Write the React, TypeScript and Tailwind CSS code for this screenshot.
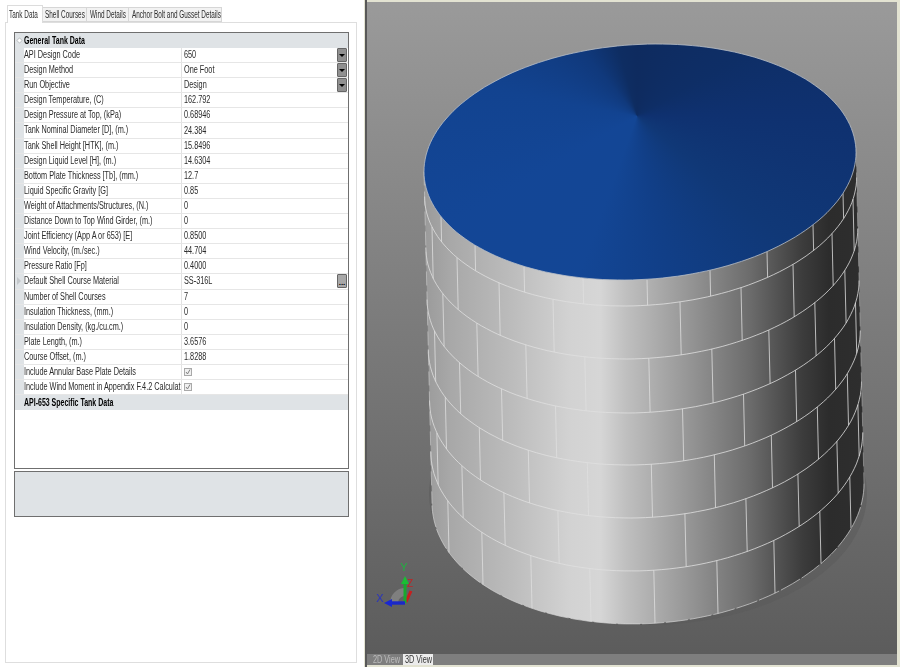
import React from "react";

type Row = { label: string; value?: string; button?: "drop" | "more"; check?: boolean; marker?: boolean };

const rows: Row[] = [
  { label: "API Design Code", value: "650", button: "drop" },
  { label: "Design Method", value: "One Foot", button: "drop" },
  { label: "Run Objective", value: "Design", button: "drop" },
  { label: "Design Temperature, (C)", value: "162.792" },
  { label: "Design Pressure at Top, (kPa)", value: "0.68946" },
  { label: "Tank Nominal Diameter [D], (m.)", value: "24.384" },
  { label: "Tank Shell Height [HTK], (m.)", value: "15.8496" },
  { label: "Design Liquid Level [H], (m.)", value: "14.6304" },
  { label: "Bottom Plate Thickness [Tb], (mm.)", value: "12.7" },
  { label: "Liquid Specific Gravity [G]", value: "0.85" },
  { label: "Weight of Attachments/Structures, (N.)", value: "0" },
  { label: "Distance Down to Top Wind Girder, (m.)", value: "0" },
  { label: "Joint Efficiency (App A or 653) [E]", value: "0.8500" },
  { label: "Wind Velocity, (m./sec.)", value: "44.704" },
  { label: "Pressure Ratio [Fp]", value: "0.4000" },
  { label: "Default Shell Course Material", value: "SS-316L", button: "more", marker: true },
  { label: "Number of Shell Courses", value: "7" },
  { label: "Insulation Thickness, (mm.)", value: "0" },
  { label: "Insulation Density, (kg./cu.cm.)", value: "0" },
  { label: "Plate Length, (m.)", value: "3.6576" },
  { label: "Course Offset, (m.)", value: "1.8288" },
  { label: "Include Annular Base Plate Details", check: true },
  { label: "Include Wind Moment in Appendix F.4.2 Calculations", check: true },
];

function T({ children }: { children: React.ReactNode }) {
  return <span className="inline-block origin-left scale-x-[0.73] whitespace-nowrap">{children}</span>;
}

function BoldText({ children }: { children: React.ReactNode }) {
  return <span className="inline-block origin-left scale-x-[0.7] whitespace-nowrap">{children}</span>;
}

function TabText({ children }: { children: React.ReactNode }) {
  return <span className="inline-block origin-left scale-x-[0.64] whitespace-nowrap">{children}</span>;
}

function PropRow({ row }: { row: Row }) {
  return (
    <div className="flex h-[15.1px] border-b border-[#e6e6e6]">
      <div className="relative w-[9px] shrink-0 bg-[#dfe3e6]">
        {row.marker && (
          <span className="absolute left-[2px] top-[3px] h-0 w-0 border-y-[4px] border-l-[4px] border-y-transparent border-l-[#c4c8cb]" />
        )}
      </div>
      <div className="w-[158px] shrink-0 overflow-hidden whitespace-nowrap border-r border-[#e2e2e2] leading-[14px]">
        <T>{row.label}</T>
      </div>
      <div className="flex min-w-0 flex-1 items-center justify-between pl-[1.5px] leading-[14px]">
        {row.check ? (
          <span className="flex h-[8px] w-[8px] items-center justify-center border border-[#a9a9a9] bg-[#f0f0f0]">
            <svg width="6" height="6" viewBox="0 0 6 6">
              <path d="M1 3 L2.5 5 L5 0.5" fill="none" stroke="#777" strokeWidth="0.9" />
            </svg>
          </span>
        ) : (
          <T>{row.value}</T>
        )}
        {row.button === "drop" && (
          <span className="mr-px flex h-[14px] w-[10px] items-center justify-center rounded-[1px] border border-[#666] bg-[#909090]">
            <span className="h-0 w-0 border-x-[3px] border-t-[3px] border-x-transparent border-t-black" />
          </span>
        )}
        {row.button === "more" && (
          <span className="mr-px flex h-[14px] w-[10px] items-end justify-center rounded-[1px] border border-[#666] bg-[#a8a8a8] text-[8px] font-bold leading-[9px] text-black">
            ...
          </span>
        )}
      </div>
    </div>
  );
}

const A = 216;
const SHEAR = 9.5;
const geo = (h: number) => ({ cx: 640 + 8 * h, cy: 162 + 331 * h, b: 117.6 + 13 * h });
const pt = (t: number, h: number) => {
  const g = geo(h);
  return [g.cx + A * Math.cos(t), g.cy + g.b * Math.sin(t) - SHEAR * Math.cos(t)];
};
const fmt = (p: number[]) => `${p[0].toFixed(1)} ${p[1].toFixed(1)}`;
const arc = (h: number, from: number, to: number, n = 90) => {
  const out: string[] = [];
  for (let i = 0; i <= n; i++) out.push(fmt(pt(from + ((to - from) * i) / n, h)));
  return out;
};
const lowestToH = (y: number) => (y - 280) / 344;
const joints = [280, 306, 359, 413, 465, 518, 571, 624].map(lowestToH);
const oddX = [441, 475, 524, 583, 647, 710, 767, 813, 843];
const evenX = [432, 457, 499, 553, 680, 741, 793, 832, 853];
const thetaOf = (x: number, h: number) => Math.acos((x - geo(h).cx) / A);

function Scene() {
  const topOutline = "M" + arc(0, 0, Math.PI * 2, 180).join(" L") + " Z";
  const side =
    "M" + arc(1, 0, Math.PI).join(" L") + " L" + fmt(pt(Math.PI, 0)) + " L" + fmt(pt(0, 0)) + " Z";
  const lines = [];
  for (let k = 0; k < 7; k++) {
    const xs = k % 2 === 0 ? oddX : evenX;
    const ref = joints[k % 2 === 0 ? 0 : 1];
    for (const x of xs) {
      const t = thetaOf(x, ref);
      lines.push(
        <path
          key={`${k}-${x}`}
          d={`M${fmt(pt(t, joints[k]))} L${fmt(pt(t, joints[k + 1]))}`}
          stroke="#dedede"
          strokeWidth="0.8"
          fill="none"
        />
      );
    }
  }
  return (
    <svg className="block h-[652px] w-[530px] [filter:blur(0.3px)]" viewBox="367 2 530 652">
      <defs>
        <linearGradient id="shell" gradientUnits="userSpaceOnUse" x1="424" y1="0" x2="864" y2="0">
          <stop offset="0" stopColor="#9a9a9a" />
          <stop offset="0.06" stopColor="#a8a8a8" />
          <stop offset="0.2" stopColor="#bcbcbc" />
          <stop offset="0.33" stopColor="#d2d2d2" />
          <stop offset="0.4" stopColor="#d6d6d6" />
          <stop offset="0.46" stopColor="#bfbfbf" />
          <stop offset="0.58" stopColor="#9c9c9c" />
          <stop offset="0.74" stopColor="#6c6c6c" />
          <stop offset="0.86" stopColor="#3c3c3c" />
          <stop offset="0.92" stopColor="#2c2c2c" />
          <stop offset="1" stopColor="#2e2e2e" />
        </linearGradient>
        <clipPath id="roof">
          <path d={topOutline} />
        </clipPath>
        <linearGradient id="bg" x1="0" y1="0" x2="0" y2="1">
          <stop offset="0" stopColor="#9a9a9a" />
          <stop offset="1" stopColor="#5c5c5c" />
        </linearGradient>
      </defs>
      <rect x="367" y="2" width="530" height="652" fill="url(#bg)" />
      <ellipse cx="648" cy="494" rx="219" ry="131" fill="#5a5a5a" opacity="0.5" />
      <path d={side} fill="url(#shell)" />
      {lines}
      {joints.slice(1, -1).map((h, i) => (
        <path key={i} d={"M" + arc(h, 0, Math.PI).join(" L")} fill="none" stroke="#e0e0e0" strokeWidth="0.8" />
      ))}
      <path d={"M" + arc(1, 0, Math.PI).join(" L")} fill="none" stroke="#d4d4d4" strokeWidth="0.7" strokeDasharray="22 2" />
      <path d={`M${fmt(pt(Math.PI, 0))} L${fmt(pt(Math.PI, 1))}`} stroke="#cfcfcf" strokeWidth="0.6" strokeDasharray="14 6" />
      <path d={`M${fmt(pt(0, 0))} L${fmt(pt(0, 1))}`} stroke="#a8a8a8" strokeWidth="0.6" strokeDasharray="14 6" />
      <g clipPath="url(#roof)">
        <foreignObject x="420" y="40" width="442" height="244">
          <div className="h-[244px] w-[442px] bg-[conic-gradient(at_217px_76px,#0e2b5f_0deg,#0e2e66_60deg,#0f3170_90deg,#103877_130deg,#113f88_170deg,#134695_200deg,#134696_240deg,#124390_280deg,#10397c_320deg,#0e2d62_345deg,#0e2b5f_360deg)]" />
        </foreignObject>
      </g>
      <path d={topOutline} fill="none" stroke="#b9bfc8" strokeWidth="0.8" />

      <path d="M390 603 A15 15 0 0 1 405 588 L405 596 A7 7 0 0 0 398 603 Z" fill="#7f7f7f" />
      <path d="M406 602 L411 591" stroke="#c81e1e" strokeWidth="3" />
      <path d="M405 603 L405 583" stroke="#18a82e" strokeWidth="3" />
      <path d="M401 584 L405 576 L409 584 Z" fill="#18c034" />
      <path d="M405 603 L391 603" stroke="#1a28c8" strokeWidth="3.4" />
      <path d="M392 599 L384 603 L392 607 Z" fill="#1a28d0" />
      <text x="404" y="571" textAnchor="middle" fontSize="11" fill="#20b040" fontFamily="Liberation Sans, sans-serif">Y</text>
      <text x="380" y="602" textAnchor="middle" fontSize="11" fill="#2832c0" fontFamily="Liberation Sans, sans-serif">X</text>
      <text x="410" y="587" textAnchor="middle" fontSize="10" fill="#c02424" fontFamily="Liberation Sans, sans-serif">Z</text>
    </svg>
  );
}

export default function App() {
  return (
    <div className="flex h-[667px] w-[900px] overflow-hidden bg-white font-['Liberation_Sans',Arial,sans-serif] text-[10px] text-[#2b2b2b]">
      <div className="flex w-[365px] shrink-0 flex-col pl-[5px] pt-[5px] [filter:blur(0.35px)]">
        <div className="flex h-[17px] items-end pl-[2px] leading-[13px]">
          <div className="relative z-10 -mb-px flex h-[18px] w-[36px] items-center border border-b-0 border-[#dcdcdc] bg-white pl-[1px]"><TabText>Tank Data</TabText></div>
          <div className="flex h-[15px] w-[44px] items-center border-y border-r border-[#d6d6d6] bg-[#f2f2f2] pl-[2px]"><TabText>Shell Courses</TabText></div>
          <div className="flex h-[15px] w-[42px] items-center border-y border-r border-[#d6d6d6] bg-[#f2f2f2] pl-[3px]"><TabText>Wind Details</TabText></div>
          <div className="flex h-[15px] w-[93px] items-center border-y border-r border-[#d6d6d6] bg-[#f2f2f2] pl-[3px]"><TabText>Anchor Bolt and Gusset Details</TabText></div>
        </div>
        <div className="flex h-[641px] w-[352px] flex-col border border-[#dedede] pl-[8px] pr-[7px] pt-[9px]">
          <div className="flex h-[437px] flex-col border border-[#6f6f6f] bg-white">
            <div className="relative flex h-[15px] items-center bg-[#dfe3e6] pl-[9px] font-bold text-black">
              <span className="absolute left-[2px] top-[5px] h-[5px] w-[5px] rotate-45 border border-[#c4c8cb] bg-white" />
              <BoldText>General Tank Data</BoldText>
            </div>
            {rows.map((r) => (
              <PropRow key={r.label} row={r} />
            ))}
            <div className="flex h-[15px] items-center bg-[#dfe3e6] pl-[9px] font-bold text-black"><BoldText>API-653 Specific Tank Data</BoldText></div>
          </div>
          <div className="mt-[2px] h-[46px] border border-[#6f6f6f] bg-[#dfe3e6]" />
        </div>
      </div>
      <div className="flex flex-1 flex-col border-l-2 border-[#585858] bg-[#e3e3d2] pb-[1px] pr-[3px] pt-[2px] shadow-[-1px_0_0_#e3e3d2]">
        <Scene />
        <div className="flex h-[11px] items-end bg-[#7e7e7e] pl-[5px] leading-[10px]">
          <div className="flex h-[11px] w-[31px] items-center pl-[1px] text-[#bdbdbd]"><T>2D View</T></div>
          <div className="flex h-[11px] w-[30px] items-center bg-[#ececec] pl-[2px] text-[#333]"><T>3D View</T></div>
        </div>
      </div>
    </div>
  );
}
